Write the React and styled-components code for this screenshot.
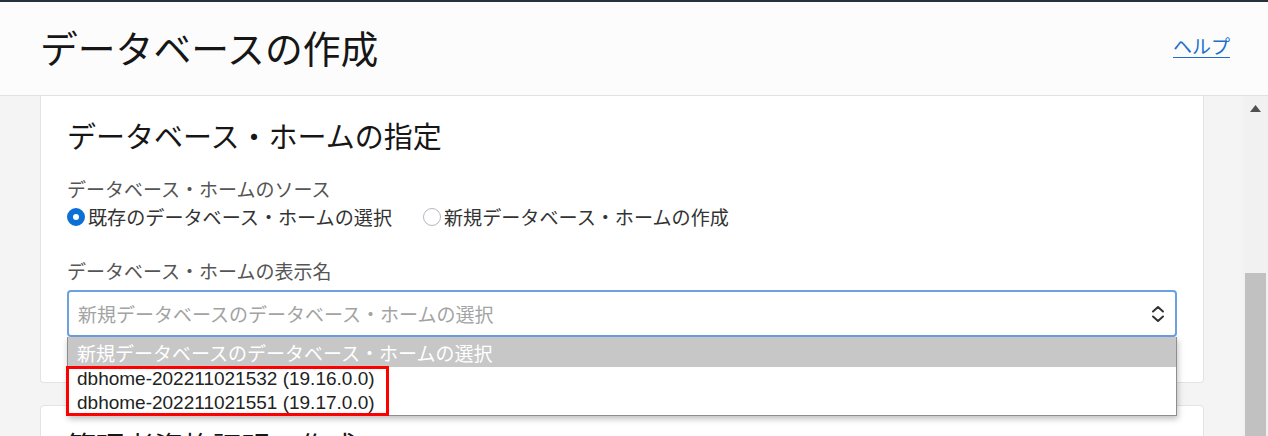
import React from "react";
import styled, { createGlobalStyle } from "styled-components";

const GlobalStyle = createGlobalStyle`
  html, body { margin: 0; padding: 0; }
  body {
    font-family: "Noto Sans CJK JP", "Liberation Sans", sans-serif;
    background: #f4f4f4;
    color: #161616;
  }
`;

const Page = styled.div`
  width: 1268px;
  height: 436px;
  display: flex;
  flex-direction: column;
  overflow: hidden;
  border-top: 2px solid #27313b;
  box-sizing: border-box;
`;

const Header = styled.header`
  flex: 0 0 94px;
  box-sizing: border-box;
  display: flex;
  align-items: center;
  justify-content: space-between;
  padding: 0 38px 4px 40px;
  background: #fcfcfc;
  border-bottom: 1px solid #e2e2e2;
`;

const Title = styled.h1`
  margin: 0;
  font-weight: 400;
  font-size: 37.8px;
  line-height: 48px;
  color: #161616;
`;

const HelpLink = styled.a`
  font-size: 19px;
  line-height: 24px;
  color: #1c6fcf;
  text-decoration: underline;
  text-underline-offset: 3px;
  margin-bottom: 2px;
`;

const Body = styled.div`
  flex: 1;
  display: flex;
  min-height: 0;
  background: #f4f4f4;
`;

const Content = styled.main`
  flex: 1;
  display: flex;
  flex-direction: column;
  gap: 22px;
  padding: 0 39px 0 40px;
  overflow: hidden;
`;

const Card = styled.section`
  position: relative;
  flex-shrink: 0;
  background: #ffffff;
  border: 1px solid #e3e3e3;
  border-top: ${(p) => (p.$cutTop ? "none" : "1px solid #e3e3e3")};
  border-radius: ${(p) => (p.$cutTop ? "0 0 4px 4px" : "4px")};
  padding: ${(p) => (p.$cutTop ? "19px 26px 45px 26px" : "19px 26px 40px 26px")};
  display: flex;
  flex-direction: column;
`;

const SectionTitle = styled.h2`
  margin: 0;
  font-weight: 400;
  font-size: 29px;
  line-height: 40px;
  color: #161616;
`;

const FieldLabel = styled.div`
  font-size: 19px;
  line-height: 26px;
  color: #555555;
  margin-top: ${(p) => p.$gap}px;
`;

const RadioRow = styled.div`
  display: flex;
  align-items: center;
  gap: 31px;
  height: 28px;
  margin-top: 1px;
`;

const RadioItem = styled.label`
  display: flex;
  align-items: center;
  gap: 3px;
  font-size: 19.1px;
  color: #333333;
`;

const RadioDot = styled.span`
  width: 18px;
  height: 18px;
  box-sizing: border-box;
  border-radius: 50%;
  border: ${(p) => (p.$checked ? "6px solid #0a70d6" : "1px solid #b4b8c0")};
  background: #ffffff;
  flex-shrink: 0;
`;

const SelectWrap = styled.div`
  position: relative;
  margin-top: 6px;
`;

const SelectBox = styled.div`
  height: 47px;
  box-sizing: border-box;
  border: 2px solid #6e9fe0;
  border-radius: 4px;
  display: flex;
  align-items: center;
  justify-content: space-between;
  padding: 0 10px 0 9px;
  background: #ffffff;
`;

const Placeholder = styled.span`
  font-size: 19px;
  color: #a3a3a3;
`;

const DropList = styled.ul`
  position: absolute;
  left: 0;
  top: 47px;
  width: 1110px;
  margin: 0;
  padding: 0;
  list-style: none;
  background: #ffffff;
  border: 1px solid #8e8e8e;
  border-top: none;
  box-sizing: border-box;
  box-shadow: 1px 3px 6px rgba(0, 0, 0, 0.25);
  z-index: 5;
  font-family: "Liberation Sans", "Noto Sans CJK JP", sans-serif;
`;

const Option = styled.li`
  height: ${(p) => (p.$first ? 30 : 24)}px;
  display: flex;
  align-items: center;
  padding-left: 9px;
  font-size: 19px;
  background: ${(p) => (p.$active ? "#c7c7c7" : "#ffffff")};
  color: ${(p) => (p.$active ? "#ffffff" : "#222222")};
  white-space: nowrap;
`;

const Annotation = styled.div`
  position: absolute;
  left: -2px;
  top: 29px;
  width: 323px;
  bottom: -1px;
  border: 3px solid #ff0000;
  box-sizing: border-box;
  pointer-events: none;
`;

const Scrollbar = styled.div`
  flex: 0 0 25px;
  background: #f1f1f1;
  display: flex;
  flex-direction: column;
  align-items: center;
`;

const ScrollButton = styled.div`
  height: 28px;
  width: 100%;
  display: flex;
  justify-content: center;
  padding-top: 9px;
  box-sizing: border-box;
`;

const ScrollTrack = styled.div`
  flex: 1;
  width: 100%;
  padding: 149px 2px 0 2px;
  box-sizing: border-box;
  display: flex;
`;

const ScrollThumb = styled.div`
  flex: 1;
  background: #c1c1c1;
`;

const Chevrons = () => (
  <svg width="14" height="20" viewBox="0 0 14 20" fill="none" stroke="#333" strokeWidth="2" strokeLinecap="round" strokeLinejoin="round">
    <path d="M2 7.5 L7 3 L12 7.5" />
    <path d="M2 12.5 L7 17 L12 12.5" />
  </svg>
);

const UpArrow = () => (
  <svg width="11" height="7" viewBox="0 0 11 7">
    <path d="M0 7 L5.5 0 L11 7 Z" fill="#505050" />
  </svg>
);

export default function App() {
  return (
    <>
      <GlobalStyle />
      <Page>
        <Header>
          <Title>データベースの作成</Title>
          <HelpLink href="#">ヘルプ</HelpLink>
        </Header>
        <Body>
          <Content>
            <Card $cutTop>
              <SectionTitle>データベース・ホームの指定</SectionTitle>
              <FieldLabel $gap={21}>データベース・ホームのソース</FieldLabel>
              <RadioRow>
                <RadioItem>
                  <RadioDot $checked />
                  既存のデータベース・ホームの選択
                </RadioItem>
                <RadioItem>
                  <RadioDot />
                  新規データベース・ホームの作成
                </RadioItem>
              </RadioRow>
              <FieldLabel $gap={27}>データベース・ホームの表示名</FieldLabel>
              <SelectWrap>
                <SelectBox>
                  <Placeholder>新規データベースのデータベース・ホームの選択</Placeholder>
                  <Chevrons />
                </SelectBox>
                <DropList>
                  <Option $first $active>新規データベースのデータベース・ホームの選択</Option>
                  <Option>dbhome-202211021532 (19.16.0.0)</Option>
                  <Option>dbhome-202211021551 (19.17.0.0)</Option>
                  <Annotation />
                </DropList>
              </SelectWrap>
            </Card>
            <Card>
              <SectionTitle>管理者資格証明の作成</SectionTitle>
            </Card>
          </Content>
          <Scrollbar>
            <ScrollButton>
              <UpArrow />
            </ScrollButton>
            <ScrollTrack>
              <ScrollThumb />
            </ScrollTrack>
          </Scrollbar>
        </Body>
      </Page>
    </>
  );
}
